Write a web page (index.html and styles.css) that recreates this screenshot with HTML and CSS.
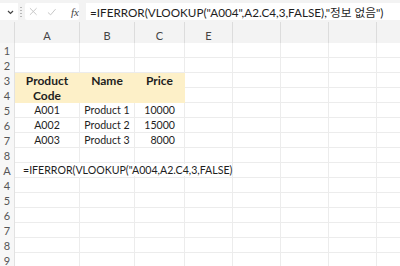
FILE: index.html
```html
<!DOCTYPE html>
<html>
<head>
<meta charset="utf-8">
<link rel="stylesheet" href="styles.css">
</head>
<body>
<div class="app">
  <div class="fbar">
    <div class="namebox">
      <svg class="chev" width="7" height="5" viewBox="0 0 7 5"><path d="M1 1 L3.5 3.5 L6 1" fill="none" stroke="#444" stroke-width="1.2"/></svg>
    </div>
    <div class="dots"></div>
    <div class="fxbox">
      <svg width="9" height="9" viewBox="0 0 9 9"><path d="M1 1 L8 8 M8 1 L1 8" stroke="#c4c4c4" stroke-width="1"/></svg>
      <svg width="10" height="8" viewBox="0 0 10 8"><path d="M1 4.5 L3.8 7 L9 1" fill="none" stroke="#c4c4c4" stroke-width="1"/></svg>
      <span class="fx">fx</span>
    </div>
    <div class="formula">=IFERROR(VLOOKUP("A004",A2.C4,3,FALSE),"정보 없음")</div>
  </div>
  <div class="sheet">
    <div class="corner"></div>
    <div class="ch">A</div><div class="ch">B</div><div class="ch">C</div><div class="ch">E</div><div class="ch"></div><div class="ch"></div><div class="ch"></div><div class="ch"></div>

    <div class="rh">1</div><div class="c"></div><div class="c"></div><div class="c"></div><div class="c"></div><div class="c"></div><div class="c"></div><div class="c"></div><div class="c"></div>
    <div class="rh">2</div><div class="c"></div><div class="c"></div><div class="c"></div><div class="c"></div><div class="c"></div><div class="c"></div><div class="c"></div><div class="c"></div>

    <div class="rh">3</div>
    <div class="c hd span2">Product<br>Code</div>
    <div class="c hd span2">Name</div>
    <div class="c hd span2">Price</div>
    <div class="c"></div><div class="c"></div><div class="c"></div><div class="c"></div><div class="c"></div>
    <div class="rh">4</div>
    <div class="c"></div><div class="c"></div><div class="c"></div><div class="c"></div><div class="c"></div>

    <div class="rh">5</div><div class="c ctr">A001</div><div class="c ctr">Product 1</div><div class="c num">10000</div><div class="c"></div><div class="c"></div><div class="c"></div><div class="c"></div><div class="c"></div>
    <div class="rh">6</div><div class="c ctr">A002</div><div class="c ctr">Product 2</div><div class="c num">15000</div><div class="c"></div><div class="c"></div><div class="c"></div><div class="c"></div><div class="c"></div>
    <div class="rh">7</div><div class="c ctr">A003</div><div class="c ctr">Product 3</div><div class="c num">8000</div><div class="c"></div><div class="c"></div><div class="c"></div><div class="c"></div><div class="c"></div>
    <div class="rh">8</div><div class="c"></div><div class="c"></div><div class="c"></div><div class="c"></div><div class="c"></div><div class="c"></div><div class="c"></div><div class="c"></div>
    <div class="rh">A</div><div class="c ovf"><span>=IFERROR(VLOOKUP("A004,A2.C4,3,FALSE)</span></div><div class="c"></div><div class="c"></div><div class="c"></div><div class="c"></div><div class="c"></div><div class="c"></div><div class="c"></div>
    <div class="rh">4</div><div class="c"></div><div class="c"></div><div class="c"></div><div class="c"></div><div class="c"></div><div class="c"></div><div class="c"></div><div class="c"></div>
    <div class="rh">5</div><div class="c"></div><div class="c"></div><div class="c"></div><div class="c"></div><div class="c"></div><div class="c"></div><div class="c"></div><div class="c"></div>
    <div class="rh">6</div><div class="c"></div><div class="c"></div><div class="c"></div><div class="c"></div><div class="c"></div><div class="c"></div><div class="c"></div><div class="c"></div>
    <div class="rh">7</div><div class="c"></div><div class="c"></div><div class="c"></div><div class="c"></div><div class="c"></div><div class="c"></div><div class="c"></div><div class="c"></div>
    <div class="rh">8</div><div class="c"></div><div class="c"></div><div class="c"></div><div class="c"></div><div class="c"></div><div class="c"></div><div class="c"></div><div class="c"></div>
    <div class="rh">9</div><div class="c"></div><div class="c"></div><div class="c"></div><div class="c"></div><div class="c"></div><div class="c"></div><div class="c"></div><div class="c"></div>
  </div>
</div>
</body>
</html>
```

FILE: styles.css
```css
* { box-sizing: border-box; }
html, body { margin: 0; padding: 0; background: #fff; }
.app {
  width: 400px;
  height: 266px;
  overflow: hidden;
  font-family: Lato, "Noto Sans CJK KR", sans-serif;
  color: #1e1e1e;
}
.fbar {
  height: 22px;
  background: #f3f3f3;
  display: flex;
  align-items: center;
  padding: 3px 0 2px 0;
}
.namebox {
  width: 18px;
  height: 17px;
  background: #fff;
  display: flex;
  align-items: center;
  justify-content: flex-end;
  padding-right: 4px;
  padding-top: 2px;
}
.dots {
  width: 2px;
  height: 11px;
  margin: 0 3px 0 2px;
  background-image: radial-gradient(circle, #b8b8b8 0.8px, transparent 1px);
  background-size: 2px 3px;
}
.fxbox {
  width: 54px;
  height: 17px;
  background: #fff;
  border-radius: 2px;
  display: flex;
  align-items: center;
  padding-left: 4px;
  gap: 9px;
}
.fx {
  font-family: "Liberation Serif", serif;
  font-style: italic;
  font-size: 11px;
  color: #444;
  margin-left: 6px;
}
.formula {
  flex: 1;
  height: 17px;
  margin-left: 7px;
  background: #fff;
  font-size: 11.7px;
  line-height: 18px;
  padding-left: 4px;
  white-space: nowrap;
  overflow: hidden;
  color: #1e1e1e;
}
.sheet {
  display: grid;
  grid-template-columns: 15px 65px 55px 50px 48px 48px 48px 48px 48px;
  grid-template-rows: 21px repeat(15, 15px);
  font-size: 10.6px;
}
.corner { background: #f3f3f3; border-right: 1px solid #dcdcdc; }
.ch {
  background: #f3f3f3;
  border-right: 1px solid #dcdcdc;
  color: #444;
  font-size: 11px;
  text-align: center;
  line-height: 15px;
  padding-top: 6px;
}
.rh {
  background: #f7f7f7;
  color: #555;
  font-size: 11px;
  text-align: center;
  line-height: 15px;
  border-right: 1px solid #e2e2e2;
}
.c {
  border-right: 1px solid #ececec;
  border-bottom: 1px solid #ececec;
  line-height: 15px;
  white-space: nowrap;
}
.hd {
  background: #fdf0c8;
  font-weight: bold;
  font-size: 12px;
  text-align: center;
  border-color: #fdf0c8;
  grid-row: span 2;
}
.ctr { text-align: center; }
.num { text-align: right; padding-right: 9px; }
.ovf { overflow: visible; position: relative; z-index: 1; padding-left: 8px; border-right-color: transparent; }
.ovf span { background: #fff; }
```
